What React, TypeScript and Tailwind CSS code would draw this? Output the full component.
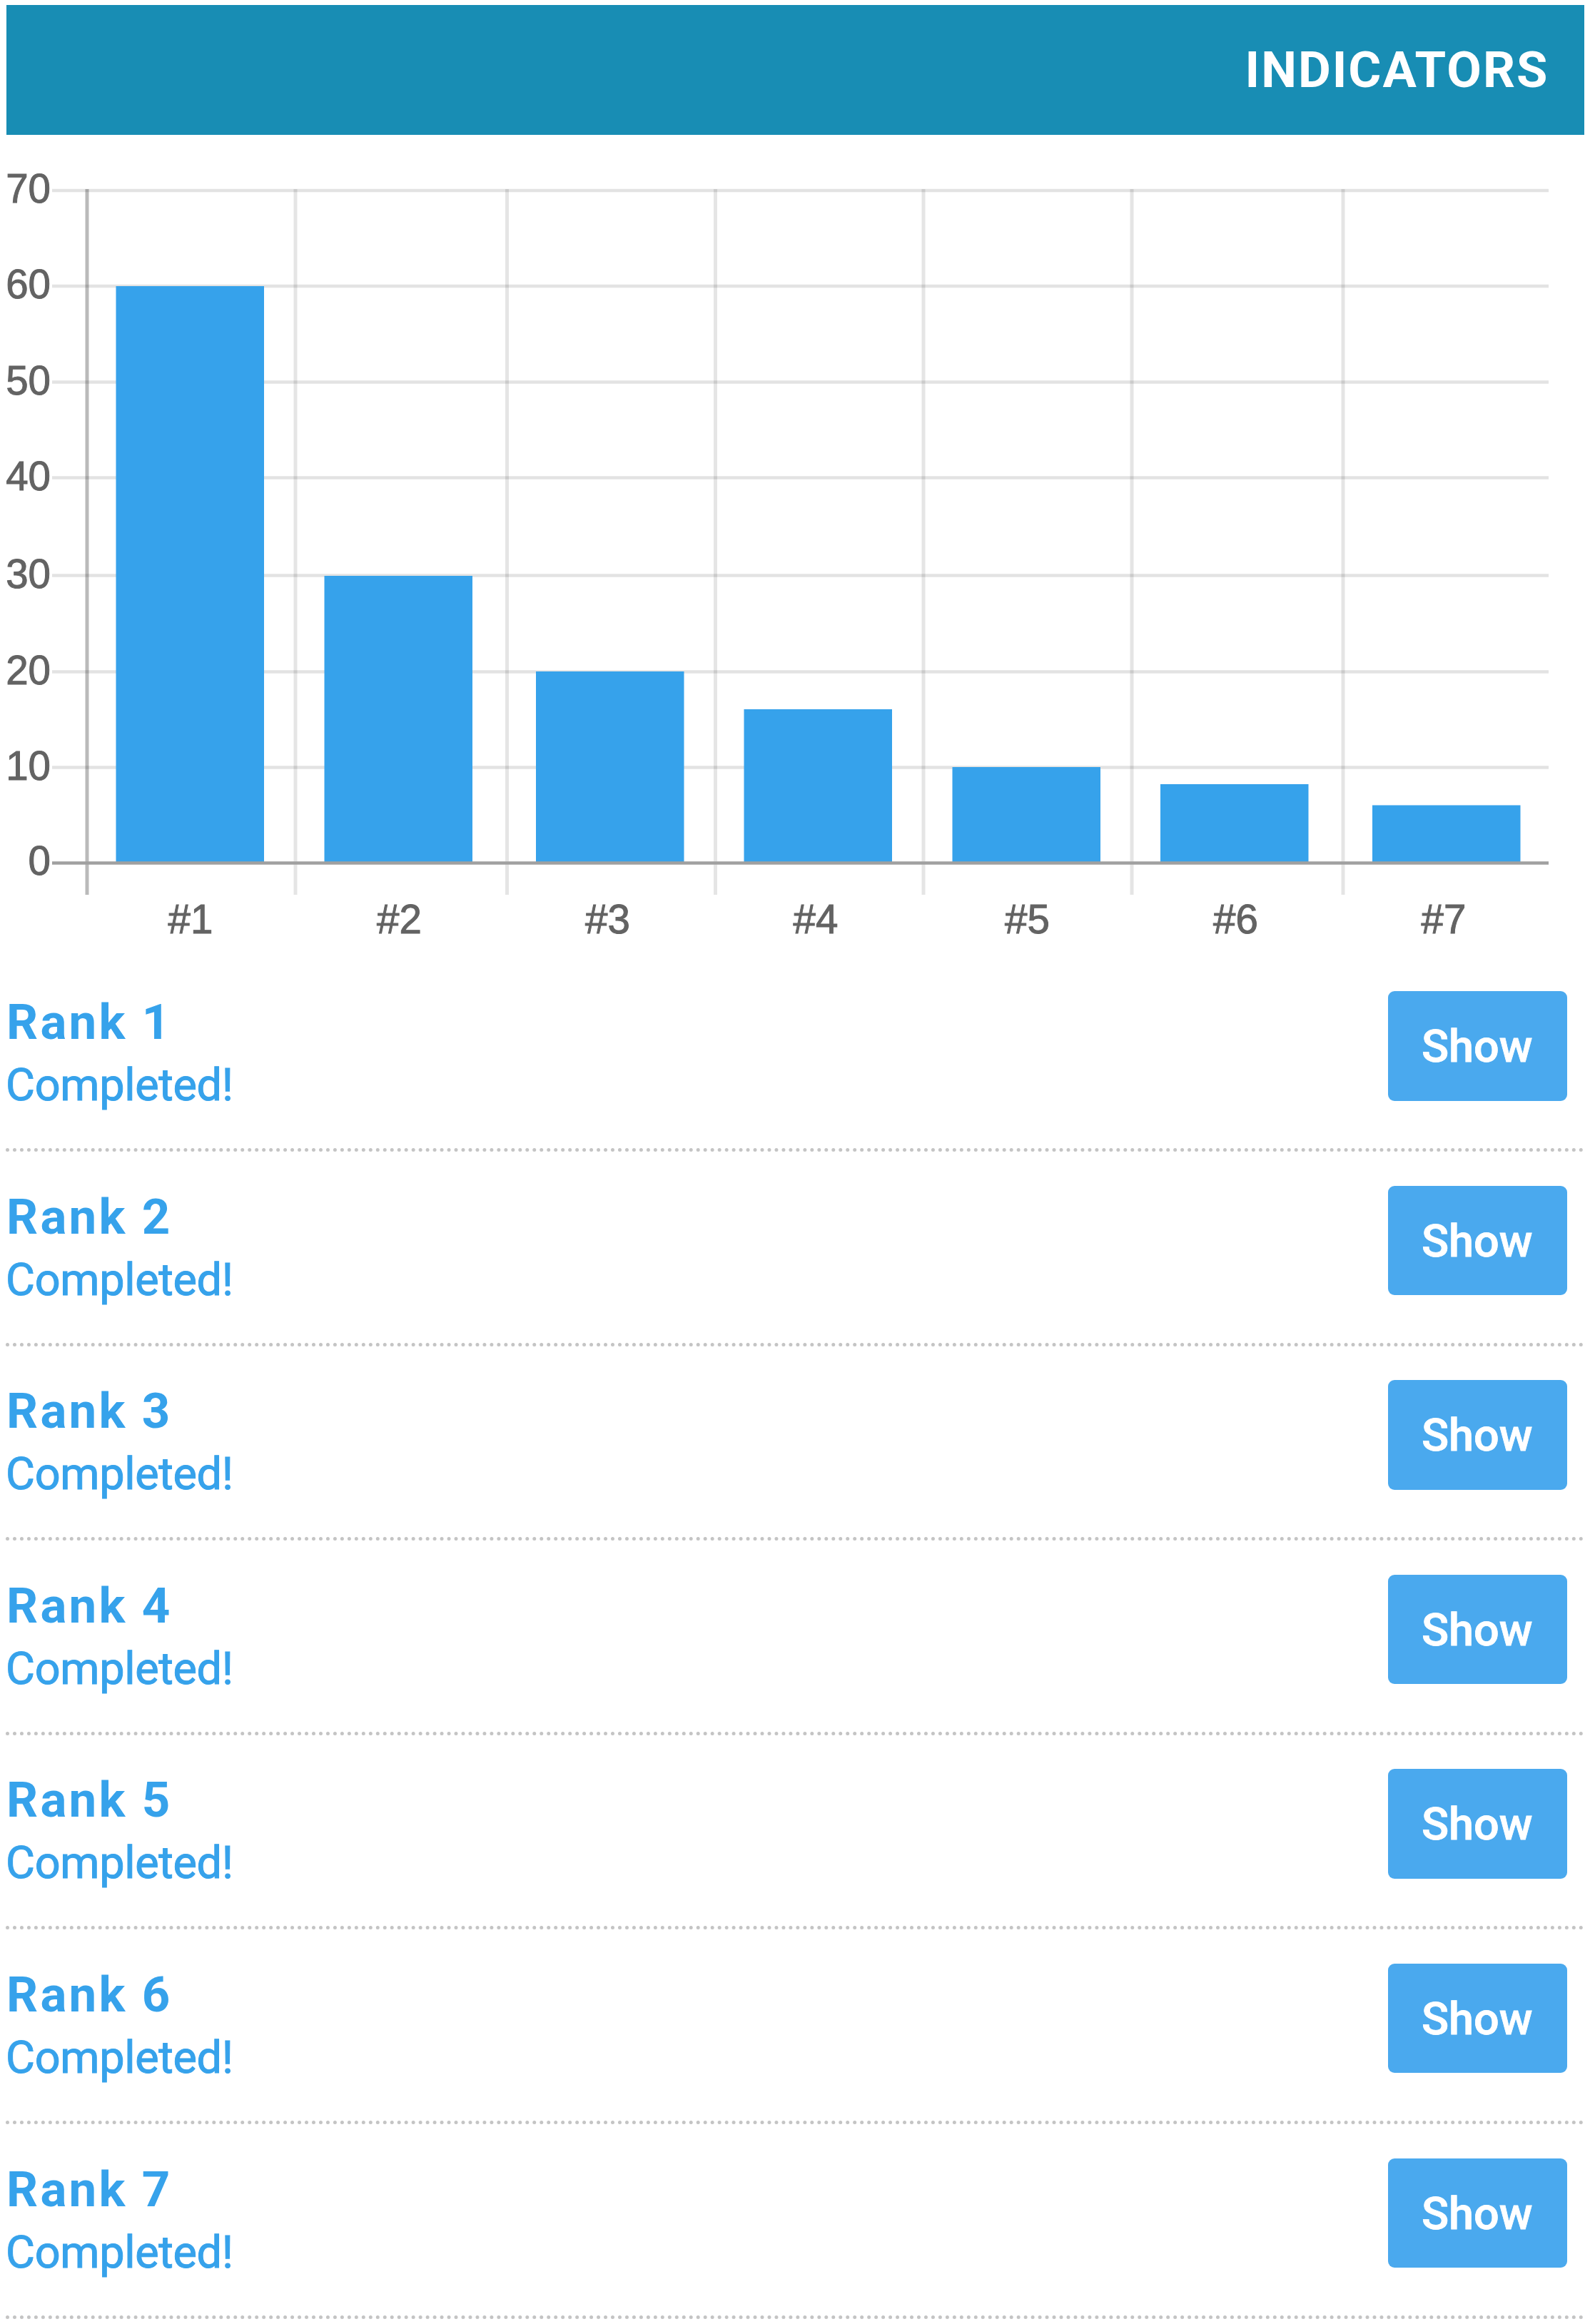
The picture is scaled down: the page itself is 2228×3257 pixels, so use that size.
import React from 'react';

const ticks = [
  { label: 70, y: 267 },
  { label: 60, y: 401 },
  { label: 50, y: 535.5 },
  { label: 40, y: 669.5 },
  { label: 30, y: 806.5 },
  { label: 20, y: 941.5 },
  { label: 10, y: 1075.5 },
];

const bars = [
  { label: '#1', grid: 122, x: 162.5, top: 401, center: 267 },
  { label: '#2', grid: 414, x: 454.5, top: 807, center: 559.5 },
  { label: '#3', grid: 710.5, x: 751, top: 941, center: 851.5 },
  { label: '#4', grid: 1002.5, x: 1042.5, top: 994, center: 1143 },
  { label: '#5', grid: 1294, x: 1334.5, top: 1075, center: 1439.5 },
  { label: '#6', grid: 1586, x: 1626, top: 1099, center: 1731.5 },
  { label: '#7', grid: 1882, x: 1923, top: 1128.5, center: 2023 },
];

const ranks = [1, 2, 3, 4, 5, 6, 7];

const IndicatorsChart: React.FC = () => (
  <svg
    className="block h-[1175px] w-[2228px] font-['Liberation_Sans',Arial,sans-serif] text-[56.5px]"
    viewBox="0 189 2228 1175"
    fill="#636363"
  >
    {ticks.map((tick) => (
      <g key={tick.label}>
        <line x1="73" x2="2170" y1={tick.y} y2={tick.y} stroke="#000" strokeOpacity="0.11" strokeWidth="4.5" />
        <text x="71" y={tick.y + 17} textAnchor="end" stroke="#636363" strokeWidth="1">
          {tick.label}
        </text>
      </g>
    ))}
    <text x="71" y="1226" textAnchor="end" stroke="#636363" strokeWidth="1">0</text>

    {bars.map((bar, i) => (
      <g key={bar.label}>
        <line
          x1={bar.grid}
          x2={bar.grid}
          y1="265"
          y2="1254"
          stroke="#000"
          strokeOpacity={i === 0 ? 0.27 : 0.1}
          strokeWidth="5"
        />
        <rect x={bar.x} y={bar.top} width="207.5" height={1209 - bar.top} fill="#36a2eb" />
        <text x={bar.center} y="1308" textAnchor="middle" stroke="#636363" strokeWidth="1">
          {bar.label}
        </text>
      </g>
    ))}
    <line x1="73" x2="2170" y1="1209.5" y2="1209.5" stroke="#a0a0a0" strokeWidth="4.5" />
  </svg>
);

export default function App() {
  return (
    <div className="h-[3257px] w-[2228px] overflow-hidden bg-white pt-[7px] font-['Roboto',sans-serif]">
      <header className="ml-[8.5px] flex h-[182px] w-[2211px] items-center justify-end bg-[#188db4] pr-[49px]">
        <h1 className="text-[70.5px] leading-none font-bold tracking-[2px] text-white">INDICATORS</h1>
      </header>

      <IndicatorsChart />

      <ul className="ml-[8px] w-[2212px]">
        {ranks.map((rank) => (
          <li key={rank} className="h-[272.6px]">
            <div className="flex h-[245px] items-start justify-between pr-[24px]">
              <div className="pt-[27px] text-[#36a2eb]">
                <h2 className="pl-px text-[69px] leading-[84px] font-bold tracking-[3.2px]">Rank {rank}</h2>
                <p className="pt-px text-[63px] leading-[90px] tracking-[-0.35px] [-webkit-text-stroke:1px_#36a2eb]">
                  Completed!
                </p>
              </div>
              <button className="mt-[25px] h-[153.5px] w-[251.5px] rounded-[9px] bg-[#4aa9ee] pt-[3px] pr-px text-[63px] font-medium text-white [-webkit-text-stroke:0.8px_#fff]">
                Show
              </button>
            </div>
            <div className="border-b-[5px] border-dotted border-[#c4c4c4]" />
          </li>
        ))}
      </ul>
    </div>
  );
}
